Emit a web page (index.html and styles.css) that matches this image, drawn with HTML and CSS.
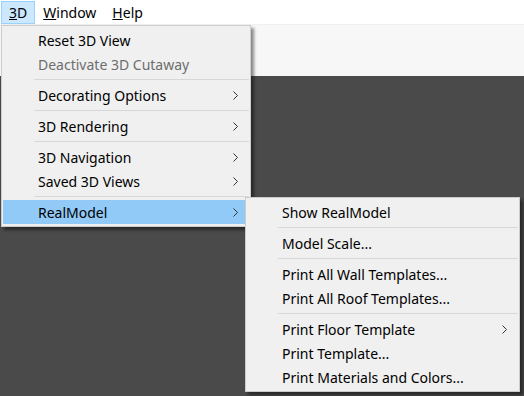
FILE: index.html
```html
<!DOCTYPE html>
<html>
<head>
<meta charset="utf-8">
<link rel="stylesheet" href="styles.css">
</head>
<body>
<div class="app">
  <div class="menubar">
    <span class="mb-item active"><u>3</u>D</span>
    <span class="mb-item"><u>W</u>indow</span>
    <span class="mb-item"><u>H</u>elp</span>
  </div>
  <div class="toolbar"></div>
  <div class="workspace"></div>
</div>

<div class="menu main-menu">
  <div class="item">Reset 3D View</div>
  <div class="item disabled">Deactivate 3D Cutaway</div>
  <div class="sep"></div>
  <div class="item">Decorating Options<svg class="arrow" viewBox="0 0 5 9"><polyline points="0.5,0.5 4.5,4.5 0.5,8.5"/></svg></div>
  <div class="sep"></div>
  <div class="item">3D Rendering<svg class="arrow" viewBox="0 0 5 9"><polyline points="0.5,0.5 4.5,4.5 0.5,8.5"/></svg></div>
  <div class="sep"></div>
  <div class="item">3D Navigation<svg class="arrow" viewBox="0 0 5 9"><polyline points="0.5,0.5 4.5,4.5 0.5,8.5"/></svg></div>
  <div class="item">Saved 3D Views<svg class="arrow" viewBox="0 0 5 9"><polyline points="0.5,0.5 4.5,4.5 0.5,8.5"/></svg></div>
  <div class="sep"></div>
  <div class="item hover">RealModel<svg class="arrow" viewBox="0 0 5 9"><polyline points="0.5,0.5 4.5,4.5 0.5,8.5"/></svg></div>
</div>

<div class="menu sub-menu">
  <div class="item">Show RealModel</div>
  <div class="sep"></div>
  <div class="item">Model Scale...</div>
  <div class="sep"></div>
  <div class="item">Print All Wall Templates...</div>
  <div class="item">Print All Roof Templates...</div>
  <div class="sep"></div>
  <div class="item">Print Floor Template<svg class="arrow" viewBox="0 0 5 9"><polyline points="0.5,0.5 4.5,4.5 0.5,8.5"/></svg></div>
  <div class="item">Print Template...</div>
  <div class="item">Print Materials and Colors...</div>
</div>
</body>
</html>
```

FILE: styles.css
```css
html, body {
  margin: 0;
  padding: 0;
  width: 524px;
  height: 396px;
  overflow: hidden;
  font-family: "Noto Sans", "DejaVu Sans", sans-serif;
  font-size: 14px;
  color: #000;
}

.app {
  display: flex;
  flex-direction: column;
  height: 396px;
}

.menubar {
  height: 24px;
  background: #fff;
  display: flex;
  align-items: stretch;
  padding-left: 1px;
  padding-top: 1px;
  box-sizing: border-box;
}

.mb-item {
  display: flex;
  align-items: center;
  padding: 0 7px;
  border: 1px solid transparent;
  line-height: 1;
}

.mb-item.active {
  background: #cce8ff;
  border-color: #99d1ff;
}

.toolbar {
  height: 51px;
  background: #f7f7f7;
  border-top: 1px solid #f0f0f0;
}

.workspace {
  flex: 1;
  background: #4a4a4a;
}

.menu {
  position: absolute;
  background: #f0f0f0;
  border: 1px solid #cccccc;
  padding: 2px 1px;
  box-shadow: 3px 3px 3px rgba(0, 0, 0, 0.45);
}

.main-menu {
  left: 1px;
  top: 25px;
  width: 246px;
}

.sub-menu {
  left: 245px;
  top: 197px;
  width: 271px;
}

.item {
  height: 24px;
  display: flex;
  align-items: center;
  padding-left: 35px;
  position: relative;
  white-space: nowrap;
}

.item.disabled {
  color: #6d6d6d;
}

.item.hover {
  background: #91c9f7;
}

.sep {
  height: 7px;
  margin-left: 31px;
  display: flex;
  flex-direction: column;
  justify-content: center;
}

.sep::after {
  content: "";
  display: block;
  height: 1px;
  background: #d7d7d7;
}

.arrow {
  position: absolute;
  right: 11px;
  top: 8px;
  width: 5px;
  height: 9px;
  fill: none;
  stroke: #333;
  stroke-width: 1;
}
```
